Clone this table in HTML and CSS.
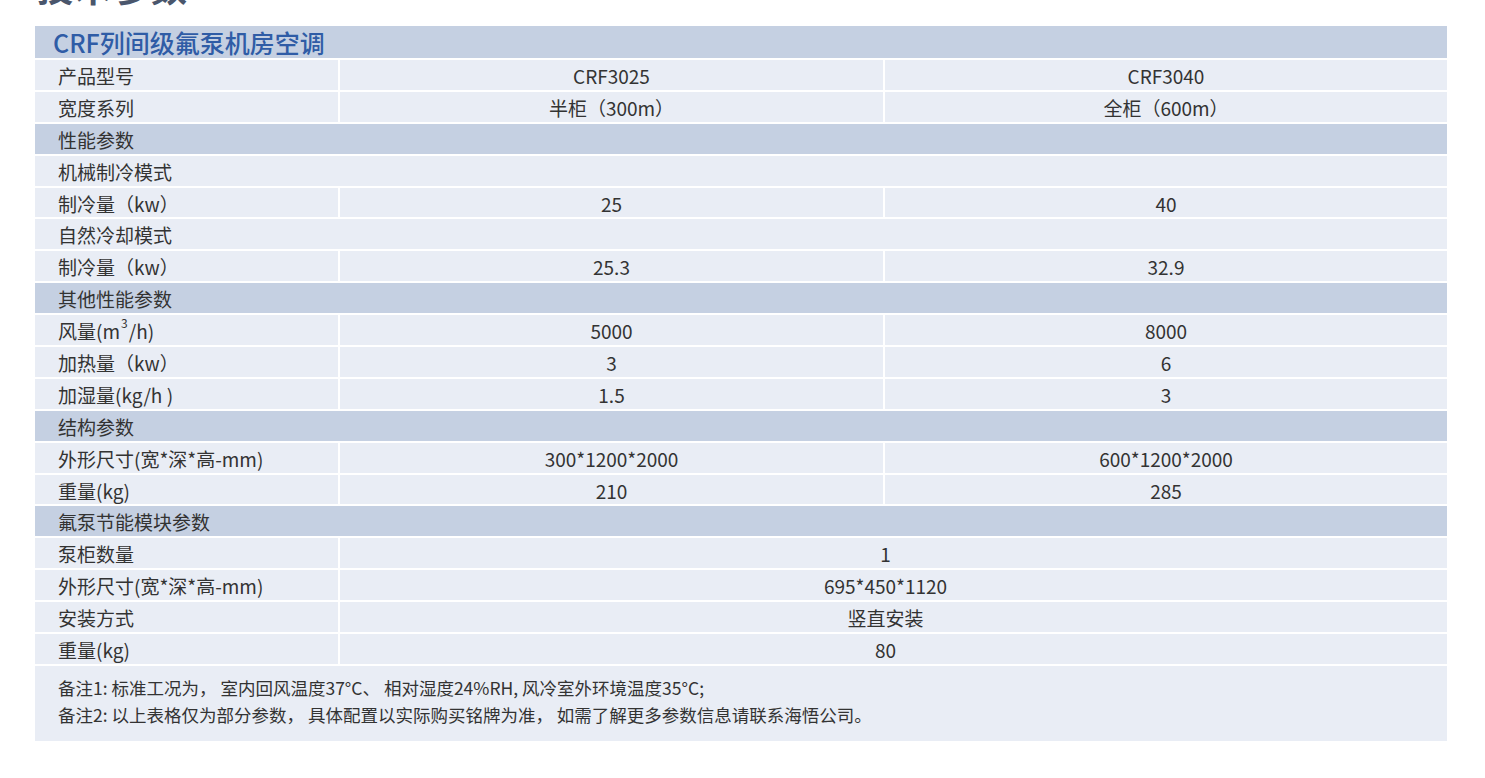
FILE: index.html
```html
<!DOCTYPE html>
<html lang="zh-CN">
<head>
<meta charset="utf-8">
<title>CRF列间级氟泵机房空调</title>
<link rel="stylesheet" href="styles.css">
</head>
<body>
<div class="page">
  <h2 class="page-title">技术参数</h2>
  <div class="spec">
    <div class="spec-title">CRF列间级氟泵机房空调</div>

    <div class="row"><div class="c label">产品型号</div><div class="c">CRF3025</div><div class="c">CRF3040</div></div>
    <div class="row"><div class="c label">宽度系列</div><div class="c">半柜（300m）</div><div class="c">全柜（600m）</div></div>

    <div class="row section"><div class="c label">性能参数</div></div>
    <div class="row full"><div class="c label">机械制冷模式</div></div>
    <div class="row"><div class="c label">制冷量（kw）</div><div class="c">25</div><div class="c">40</div></div>
    <div class="row full"><div class="c label">自然冷却模式</div></div>
    <div class="row"><div class="c label">制冷量（kw）</div><div class="c">25.3</div><div class="c">32.9</div></div>

    <div class="row section"><div class="c label">其他性能参数</div></div>
    <div class="row"><div class="c label">风量(m<sup>3</sup>/h)</div><div class="c">5000</div><div class="c">8000</div></div>
    <div class="row"><div class="c label">加热量（kw）</div><div class="c">3</div><div class="c">6</div></div>
    <div class="row"><div class="c label">加湿量(kg/h )</div><div class="c">1.5</div><div class="c">3</div></div>

    <div class="row section"><div class="c label">结构参数</div></div>
    <div class="row"><div class="c label">外形尺寸(宽*深*高-mm)</div><div class="c">300*1200*2000</div><div class="c">600*1200*2000</div></div>
    <div class="row"><div class="c label">重量(kg)</div><div class="c">210</div><div class="c">285</div></div>

    <div class="row section"><div class="c label">氟泵节能模块参数</div></div>
    <div class="row merged"><div class="c label">泵柜数量</div><div class="c">1</div></div>
    <div class="row merged"><div class="c label">外形尺寸(宽*深*高-mm)</div><div class="c">695*450*1120</div></div>
    <div class="row merged"><div class="c label">安装方式</div><div class="c">竖直安装</div></div>
    <div class="row merged"><div class="c label">重量(kg)</div><div class="c">80</div></div>

    <div class="notes">
      <p>备注1: 标准工况为， 室内回风温度37°C、 相对湿度24%RH, 风冷室外环境温度35°C;</p>
      <p>备注2: 以上表格仅为部分参数， 具体配置以实际购买铭牌为准， 如需了解更多参数信息请联系海悟公司。</p>
    </div>
  </div>
</div>
</body>
</html>
```

FILE: styles.css
```css
html, body {
  margin: 0;
  padding: 0;
  background: #ffffff;
}

body {
  font-family: "Noto Sans CJK SC", "Noto Sans", sans-serif;
  color: #333333;
  overflow: hidden;
}

.page {
  padding-left: 35px;
}

.page-title {
  margin: -32px 0 22px 2px;
  font-size: 36px;
  line-height: 36px;
  font-weight: 700;
  color: #4a566c;
  letter-spacing: 2px;
}

.spec {
  width: 1412px;
  display: flex;
  flex-direction: column;
  gap: 2px;
}

.spec-title {
  height: 32px;
  background: #c5d0e2;
  color: #2f5ca6;
  font-size: 25px;
  font-weight: 500;
  line-height: 32px;
  padding-left: 18px;
}

.row {
  height: 29.9px;
  display: grid;
  grid-template-columns: 303px 543px 562px;
  column-gap: 2px;
  font-size: 19px;
}

.row .c {
  background: #e9edf5;
  display: flex;
  align-items: center;
  justify-content: center;
  padding-top: 1px;
  box-sizing: border-box;
  white-space: nowrap;
}

.row .c.label {
  justify-content: flex-start;
  padding-left: 23px;
}

.row.section,
.row.full {
  grid-template-columns: 1fr;
}

.row.section .c {
  background: #c5d0e2;
}

.row.merged {
  grid-template-columns: 303px 1fr;
}

.row.merged .c:not(.label) {
  padding-right: 16px;
}

sup {
  font-size: 12px;
  line-height: 0;
  vertical-align: 0;
  position: relative;
  top: -8px;
  margin: 0 1px;
}

.notes {
  background: #e9edf5;
  padding: 8px 0 13px 23px;
  font-size: 17.5px;
  line-height: 27px;
}

.notes p {
  margin: 0;
}
```
